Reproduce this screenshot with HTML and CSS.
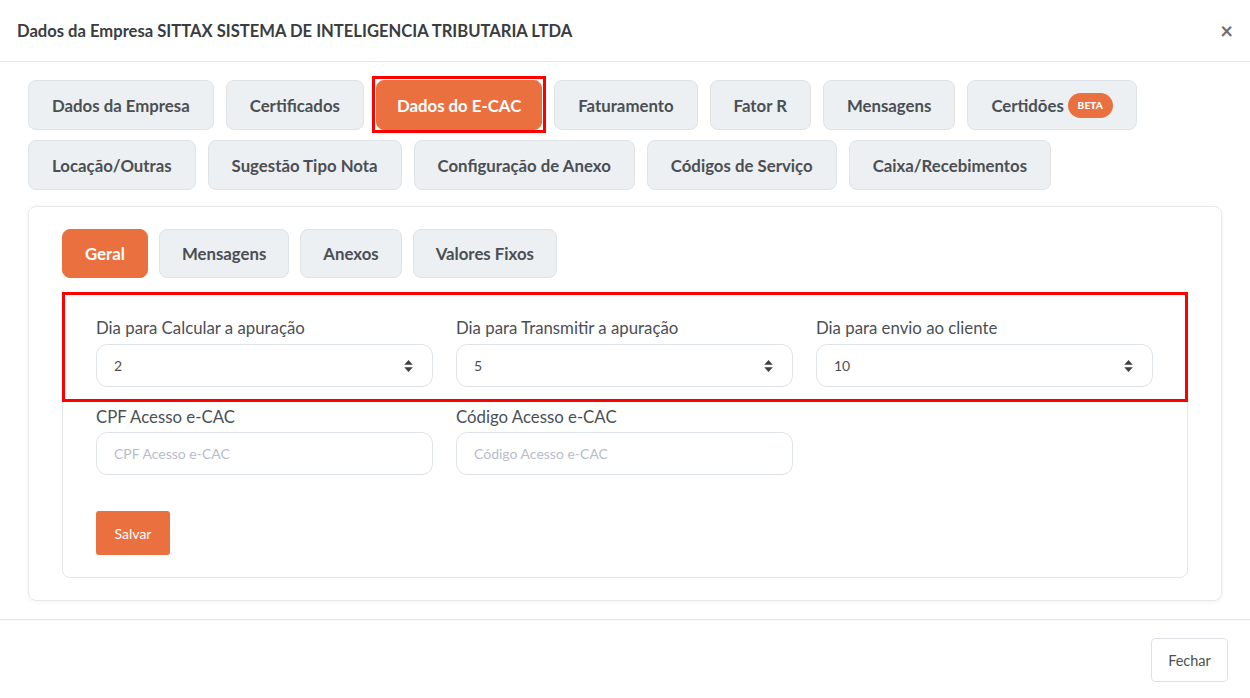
FILE: index.html
```html
<!DOCTYPE html>
<html lang="pt-BR">
<head>
<meta charset="utf-8">
<title>Dados da Empresa</title>
<link rel="stylesheet" href="styles.css">
</head>
<body>
<div class="modal">
  <header class="modal-header">
    <h1 class="modal-title">Dados da Empresa SITTAX SISTEMA DE INTELIGENCIA TRIBUTARIA LTDA</h1>
    <span class="close">&times;</span>
  </header>
  <main class="modal-body">
    <nav class="tabs">
      <span class="tab">Dados da Empresa</span>
      <span class="tab">Certificados</span>
      <span class="tab active marked">Dados do E-CAC</span>
      <span class="tab">Faturamento</span>
      <span class="tab">Fator R</span>
      <span class="tab">Mensagens</span>
      <span class="tab">Certidões <span class="badge">BETA</span></span>
      <span class="tab">Locação/Outras</span>
      <span class="tab">Sugestão Tipo Nota</span>
      <span class="tab">Configuração de Anexo</span>
      <span class="tab">Códigos de Serviço</span>
      <span class="tab">Caixa/Recebimentos</span>
    </nav>
    <section class="card">
      <nav class="subtabs">
        <span class="tab sub active">Geral</span>
        <span class="tab sub">Mensagens</span>
        <span class="tab sub">Anexos</span>
        <span class="tab sub">Valores Fixos</span>
      </nav>
      <div class="panel">
        <div class="row row-first">
          <div class="field">
            <label class="label">Dia para Calcular a apuração</label>
            <div class="select"><span>2</span><svg class="sort" viewBox="0 0 10 14" width="9" height="12"><path d="M5 0L10 5.5H0Z M5 14L0 8.5H10Z" fill="#3d4145"/></svg></div>
          </div>
          <div class="field">
            <label class="label">Dia para Transmitir a apuração</label>
            <div class="select"><span>5</span><svg class="sort" viewBox="0 0 10 14" width="9" height="12"><path d="M5 0L10 5.5H0Z M5 14L0 8.5H10Z" fill="#3d4145"/></svg></div>
          </div>
          <div class="field">
            <label class="label">Dia para envio ao cliente</label>
            <div class="select"><span>10</span><svg class="sort" viewBox="0 0 10 14" width="9" height="12"><path d="M5 0L10 5.5H0Z M5 14L0 8.5H10Z" fill="#3d4145"/></svg></div>
          </div>
        </div>
        <div class="row row-second">
          <div class="field">
            <label class="label">CPF Acesso e-CAC</label>
            <div class="input placeholder">CPF Acesso e-CAC</div>
          </div>
          <div class="field">
            <label class="label">Código Acesso e-CAC</label>
            <div class="input placeholder">Código Acesso e-CAC</div>
          </div>
          <div class="field"></div>
        </div>
        <div class="actions">
          <button class="btn-primary">Salvar</button>
        </div>
      </div>
    </section>
  </main>
  <footer class="modal-footer">
    <button class="btn-light">Fechar</button>
  </footer>
</div>
</body>
</html>
```
FILE: styles.css
```css
* { box-sizing: border-box; }
html, body { margin: 0; padding: 0; background: #fff; }
body {
  font-family: "Lato", "Noto Sans", sans-serif;
  color: #4b4f54;
  width: 1250px;
  height: 698px;
  overflow: hidden;
}
.modal-header {
  height: 62px;
  border-bottom: 1px solid #e3e5e8;
  display: flex;
  align-items: center;
  justify-content: space-between;
  padding: 0 17px;
}
.modal-title {
  margin: 0;
  font-size: 16.6px;
  font-weight: 700;
  color: #3a3d40;
}
.close {
  font-size: 22px;
  font-weight: 700;
  color: #6b6e72;
  line-height: 1;
}
.modal-body {
  padding: 18px 28px 18px 28px;
}
.tabs {
  display: flex;
  flex-wrap: wrap;
  column-gap: 12px;
  row-gap: 10px;
}
.tab {
  height: 50px;
  display: inline-flex;
  align-items: center;
  padding: 0 23px;
  background: #ecf0f2;
  border: 1px solid #dde3e7;
  border-radius: 8px;
  font-size: 16.8px;
  font-weight: 700;
  color: #4b4f54;
  white-space: nowrap;
}
.tab.active {
  background: #ea713f;
  border-color: #ea713f;
  color: #fff;
}
.tab.marked {
  position: relative;
  padding: 0 20px;
}
.tab.marked::after {
  content: "";
  position: absolute;
  inset: -5px -5px -4px -5px;
  border: 3px solid #ff0000;
}
.badge {
  display: inline-flex;
  align-items: center;
  justify-content: center;
  margin-left: 4px;
  width: 45px;
  height: 25px;
  border-radius: 13px;
  background: #ea713f;
  color: #fff;
  font-size: 10px;
  font-weight: 900;
  letter-spacing: 0.2px;
}
.card {
  margin-top: 16px;
  border: 1px solid #e6e9ec;
  border-radius: 8px;
  box-shadow: 0 1px 4px rgba(0,0,0,0.05);
  padding: 22px 33px 22px 33px;
}
.subtabs {
  display: flex;
  gap: 11px;
}
.tab.sub {
  height: 49px;
  padding: 0 22px;
}
.panel {
  margin-top: 14px;
  border: 1px solid #e4e8ec;
  border-radius: 8px;
  padding: 0 0 22px 0;
}
.row {
  display: grid;
  grid-template-columns: 337px 337px 337px;
  column-gap: 23px;
  padding: 0 33px;
}
.row-first {
  outline: 3px solid #ff0000;
  outline-offset: -3px;
  margin: -1px -1px 0 -1px;
  padding: 26px 34px 15px 34px;
}
.row-second {
  padding-top: 5px;
}
.field { display: flex; flex-direction: column; }
.label {
  font-size: 16.8px;
  line-height: 20px;
  color: #4b4f54;
  margin-bottom: 6px;
}
.row-second .label { margin-bottom: 5px; }
.select, .input {
  height: 43px;
  border: 1px solid #dfe4e9;
  border-radius: 11px;
  display: flex;
  align-items: center;
  justify-content: space-between;
  padding: 0 19px 0 17px;
  font-size: 14px;
  color: #4b4f54;
  background: #fff;
}
.sort { display: block; }
.placeholder { color: #b9bcc9; }
.actions {
  padding: 36px 33px 0 33px;
}
.btn-primary {
  height: 44px;
  width: 74px;
  border: none;
  border-radius: 3px;
  background: #ea713f;
  color: #fff;
  font-family: inherit;
  font-size: 14px;
}
.modal-footer {
  border-top: 1px solid #e3e5e8;
  display: flex;
  justify-content: flex-end;
  padding: 18px 22px 0 0;
}
.btn-light {
  height: 44px;
  width: 77px;
  border: 1px solid #dee2e6;
  border-radius: 4px;
  background: #fff;
  color: #4b4f54;
  font-family: inherit;
  font-size: 14.5px;
}
```
